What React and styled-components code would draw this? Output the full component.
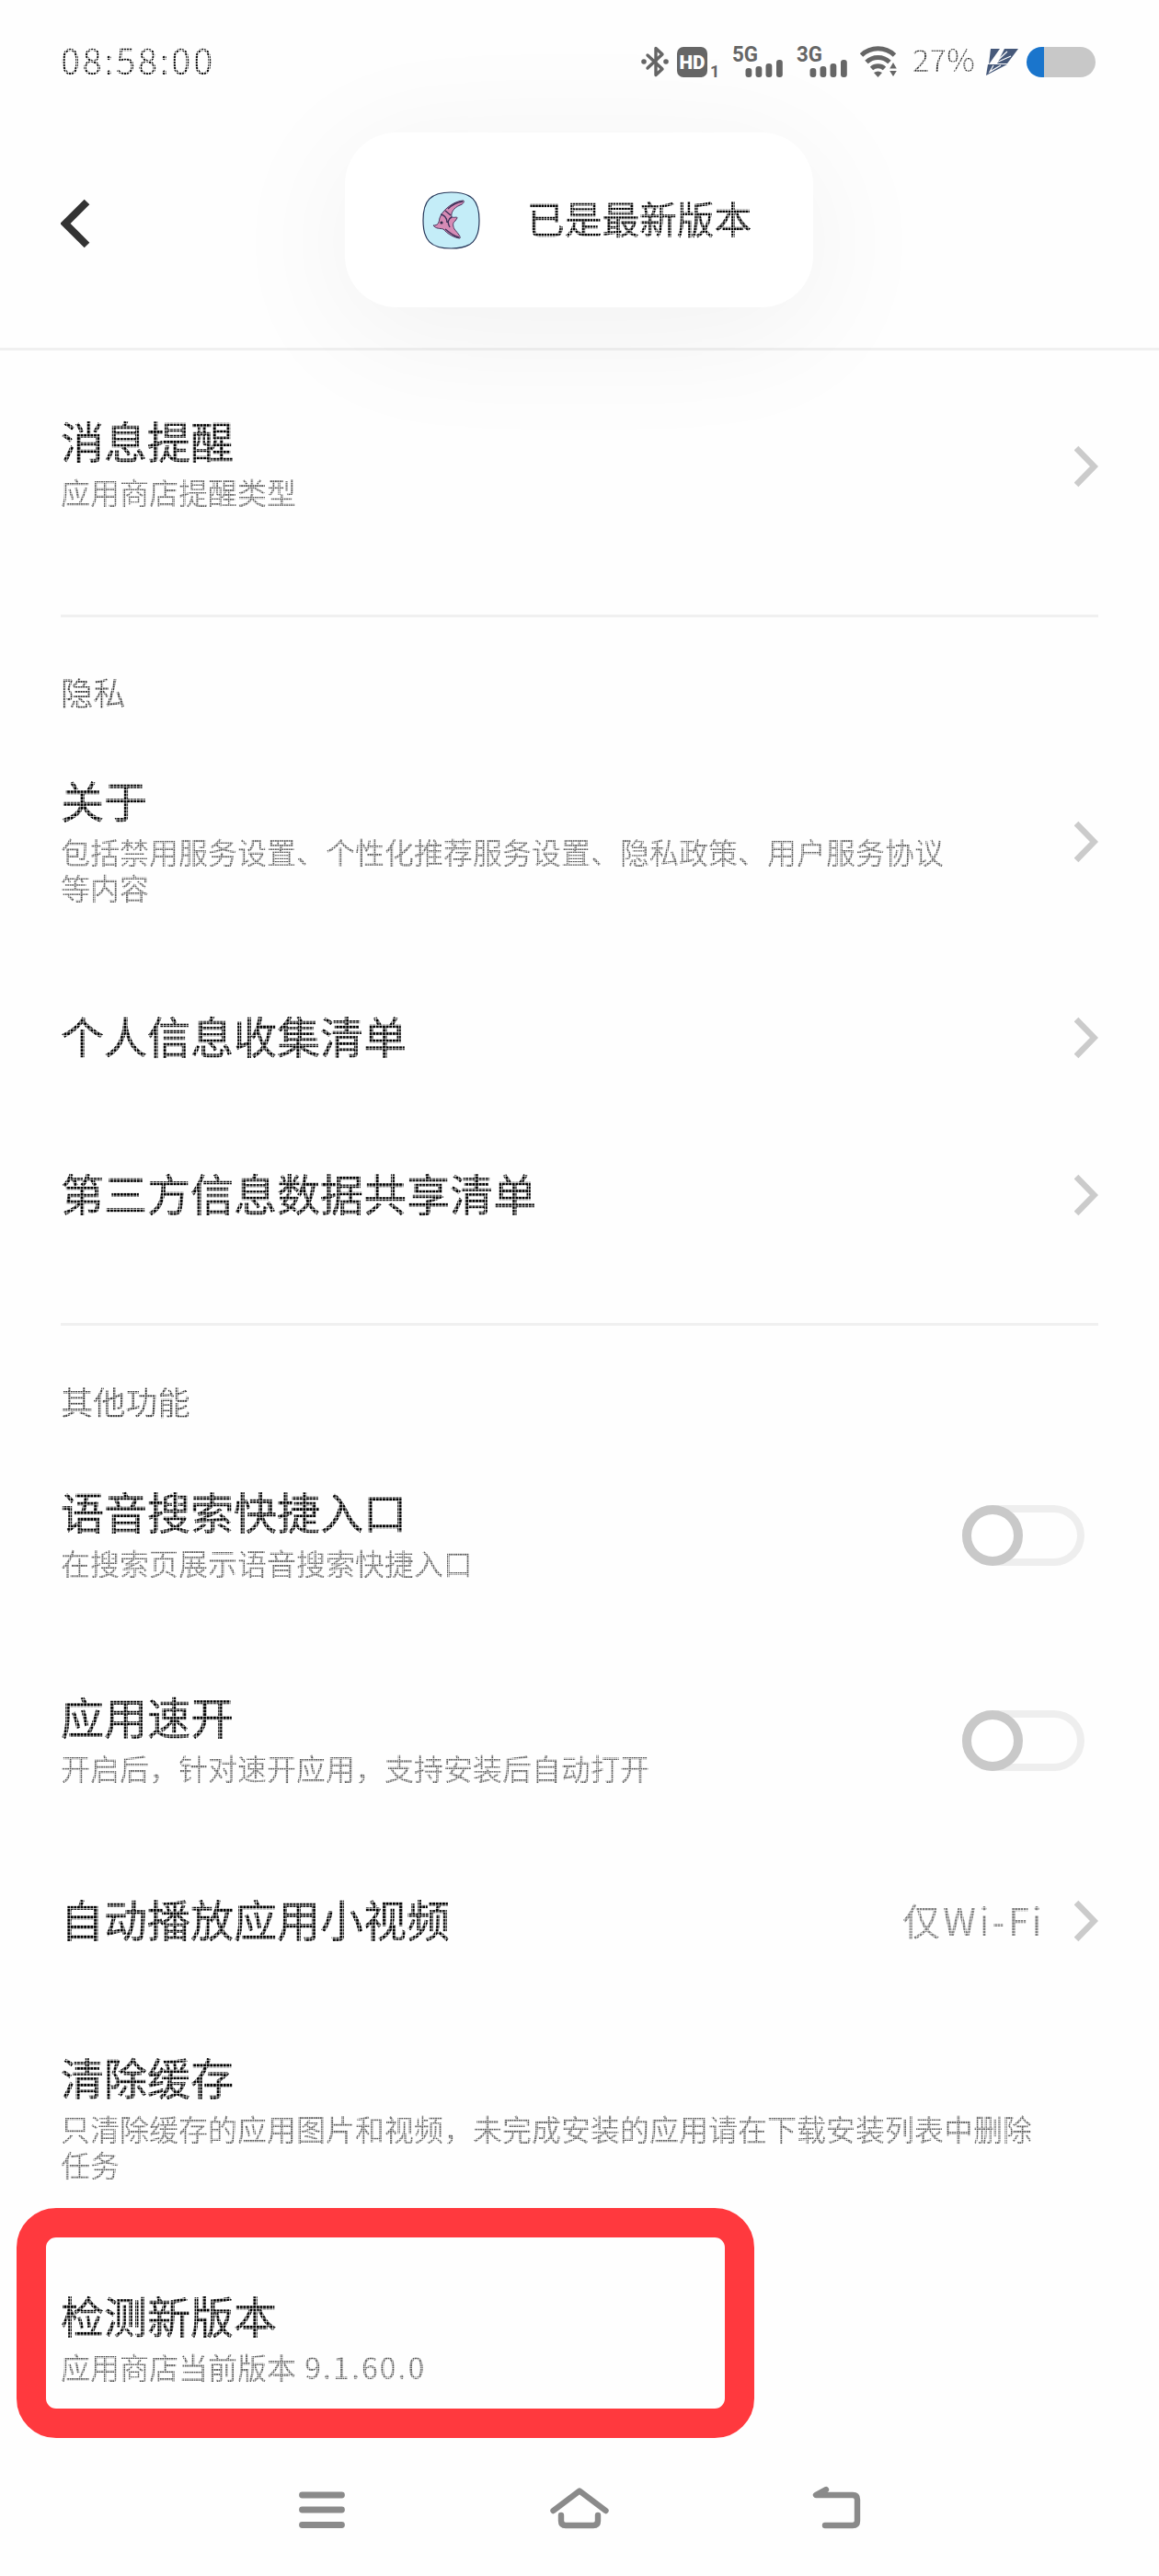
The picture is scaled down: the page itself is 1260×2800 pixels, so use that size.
import React, { useState } from 'react';
import styled, { createGlobalStyle, css } from 'styled-components';

const GlobalStyle = createGlobalStyle`
  * {
    box-sizing: border-box;
  }

  body {
    margin: 0;
    background: #fefefe;
    font-family: 'Noto Sans CJK SC', 'Liberation Sans', sans-serif;
  }
`;

// dot matrix look: every character sits on a 13 x 13 grid
const dotted = css`
  mask-image: linear-gradient(to right, #000 74%, rgba(0, 0, 0, 0.25) 74%),
    linear-gradient(to bottom, #000 74%, rgba(0, 0, 0, 0.25) 74%);
  mask-size: calc(1em / 13) calc(1em / 13);
  mask-composite: intersect;
`;

const Screen = styled.div`
  width: 1260px;
  height: 2800px;
  display: flex;
  flex-direction: column;
  position: relative;
  overflow: hidden;
`;

const StatusBar = styled.div`
  height: 134px;
  padding: 0 69px 0 66px;
  display: flex;
  align-items: center;
  justify-content: space-between;
`;

const Time = styled.span`
  ${dotted}
  margin-bottom: 7px;
  font-size: 39px;
  font-weight: 300;
  line-height: 60px;
  letter-spacing: 2.9px;
  color: #111;
  -webkit-text-stroke: 0.4px #111;
`;

const StatusIcons = styled.div`
  display: flex;
  align-items: center;
`;

const Signals = styled.div`
  margin: 0 11px 0 8px;
  display: flex;
  gap: 12px;
`;

const Percent = styled.span`
  ${dotted}
  width: 79px;
  margin: 0 0 6px 16px;
  font-size: 34px;
  font-weight: 300;
  line-height: 60px;
  letter-spacing: 0.4px;
  color: #222;
`;

const Battery = styled.div`
  width: 75px;
  height: 33px;
  margin-left: 9px;
  border-radius: 17px;
  background: linear-gradient(to right, #1a75cc 19px, #c8c8c8 19px);
`;

const Header = styled.header`
  height: 247px;
  padding: 82px 66px 0;
  border-bottom: 3px solid #f0f0f0;
`;

const BackButton = styled.button`
  display: block;
  padding: 0;
  border: none;
  background: none;
  cursor: pointer;
`;

const Toast = styled.div`
  position: absolute;
  top: 144px;
  left: 375px;
  width: 509px;
  height: 190px;
  padding-left: 84px;
  display: flex;
  align-items: center;
  gap: 51px;
  border-radius: 56px;
  background: #fff;
  box-shadow: 0 24px 150px rgba(0, 0, 0, 0.06);
`;

const ToastText = styled.span`
  ${dotted}
  margin-bottom: 5px;
  font-size: 40.7px;
  line-height: 60px;
  color: #000;
  -webkit-text-stroke: 0.4px #000;
`;

const Content = styled.main`
  padding: 0 66px;
  display: flex;
  flex-direction: column;
`;

const Divider = styled.div`
  height: 3px;
  margin-top: ${({ $top }) => $top}px;
  background: #f0f0f0;
`;

const SectionLabel = styled.div`
  ${dotted}
  margin-top: ${({ $top }) => $top}px;
  font-size: 35.2px;
  line-height: 40px;
  color: #333;
`;

const Row = styled.div`
  position: relative;
  height: ${({ $height }) => $height}px;
  margin-top: ${({ $top }) => $top}px;
  display: flex;
  align-items: center;
  justify-content: space-between;
`;

const RowText = styled.div`
  align-self: flex-start;
  width: ${({ $width }) => $width}px;
`;

const Title = styled.div`
  ${dotted}
  font-size: 47px;
  line-height: 56px;
  color: #000;
  -webkit-text-stroke: 0.6px #000;
`;

const Description = styled.div`
  ${dotted}
  margin-top: 9px;
  font-size: 32px;
  line-height: 39px;
  color: #555;
`;

const Version = styled.span`
  margin-left: 2px;
  letter-spacing: 2.1px;
`;

const RowEnd = styled.div`
  display: flex;
  align-items: center;
  gap: 32px;
`;

const Value = styled.span`
  ${dotted}
  margin-bottom: 4px;
  font-size: 41px;
  line-height: 56px;
  letter-spacing: 3.1px;
  color: #7c7c7c;
`;

const Switch = styled.button`
  width: 134px;
  height: 66px;
  margin-right: 15px;
  padding: 0;
  display: flex;
  justify-content: ${({ $on }) => ($on ? 'flex-end' : 'flex-start')};
  border: none;
  border-radius: 33px;
  background: none;
  box-shadow: inset 0 0 0 8px #eee;
  cursor: pointer;
`;

const Knob = styled.span`
  width: 66px;
  height: 66px;
  border: 10px solid #c9c9c9;
  border-radius: 50%;
  background: #fff;
`;

const Highlight = styled.div`
  position: absolute;
  top: -88px;
  left: -48px;
  width: 802px;
  height: 250px;
  border: 32.5px solid #ff393e;
  border-radius: 43px;
  pointer-events: none;
`;

const NavBar = styled.nav`
  margin-top: 103px;
  padding: 0 323px;
  display: flex;
  align-items: center;
  justify-content: space-between;
`;

const SignalIcon = ({ label }) => (
  <svg width="58" height="60" viewBox="0 -12 58 60">
    <text
      x="0"
      y="17.5"
      fontFamily="Roboto, sans-serif"
      fontSize="24"
      fontWeight="700"
      textLength="28"
      lengthAdjust="spacingAndGlyphs"
      fill="#666"
    >
      {label}
    </text>
    <g fill="#666">
      <rect x="14.5" y="25" width="6.8" height="10" rx="3" />
      <rect x="25.5" y="23" width="6.8" height="12" rx="3" />
      <rect x="36.5" y="20" width="6.8" height="15" rx="3" />
      <rect x="48" y="16" width="6.8" height="19" rx="3" />
    </g>
  </svg>
);

const BluetoothIcon = () => (
  <svg width="32" height="36" viewBox="0 0 32 36">
    <path
      d="M8 11 L24 26 L17 32.5 V3.5 L24 10 L8 25"
      fill="none"
      stroke="#666"
      strokeWidth="3.4"
      strokeLinejoin="round"
      strokeLinecap="round"
    />
    <circle cx="4" cy="18" r="2.8" fill="#666" />
    <circle cx="28" cy="18" r="2.8" fill="#666" />
  </svg>
);

const HdIcon = () => (
  <svg width="60" height="60" viewBox="0 -12 60 60">
    <rect x="8" y="2" width="33" height="33" rx="7" fill="#666" />
    <text
      x="10.5"
      y="26"
      fontFamily="Roboto, sans-serif"
      fontSize="21"
      fontWeight="900"
      textLength="28"
      lengthAdjust="spacingAndGlyphs"
      fill="#fff"
    >
      HD
    </text>
    <text
      x="44"
      y="34.5"
      fontFamily="Roboto, sans-serif"
      fontSize="18"
      fontWeight="700"
      fill="#666"
    >
      1
    </text>
  </svg>
);

const WifiIcon = () => (
  <svg width="41" height="36" viewBox="0 0 41 36">
    <g fill="none" stroke="#666" strokeWidth="5">
      <path d="M1.5 11 A26 26 0 0 1 37.5 11" />
      <path d="M7 18.5 A18 18 0 0 1 32 18.5" />
      <path d="M12.5 25.5 A10.5 10.5 0 0 1 26.5 25.5" />
    </g>
    <path d="M15 30 Q19.5 27 24 30 L19.5 35 Z" fill="#666" />
    <path d="M36 19 L39.8 25.5 H32.2 Z M36 34 L39.8 28 H32.2 Z" fill="#666" />
  </svg>
);

const FlashIcon = () => (
  <svg width="36" height="31" viewBox="0 0 36 31">
    <path d="M6 1 H16 L4 18 Z" fill="#46597a" />
    <path d="M21 1 H36 L24 17 H13 Z" fill="#46597a" />
    <path d="M3 18 H24 L1 30 Z" fill="#46597a" />
    <path d="M24 4 L10 17 L28 9 M9 19 L5 26 L17 19" fill="none" stroke="#fff" strokeWidth="1.2" />
  </svg>
);

const FishIcon = () => (
  <svg width="63" height="63" viewBox="0 0 63 63">
    <path
      d="M31.5 1 C54 1 62 10 62 31.5 C62 53 54 62 31.5 62 C9 62 1 53 1 31.5 C1 10 9 1 31.5 1 Z"
      fill="#c4edf8"
      stroke="#28385a"
      strokeWidth="1.2"
    />
    <path
      d="M12 37 C17 37 18 35 19 29 C22 20 35 10 45 10 C46 12 44 14 41 15 C34 18 31 23 32 28 C36 29 38 27 38 29 L36 32 C33 34 33 37 35 41 C39 46 42 49 41 51 C36 51 27 46 23 41 C19 40 15 41 12 37 Z"
      fill="#d68bb5"
      stroke="#49365f"
      strokeWidth="1"
      strokeLinejoin="round"
    />
    <path
      d="M20 25 C25 26 27 30 27 34 M25 21 L31 26 M32 28 C28 30 27 34 30 39 M25 41 C31 46 35 49 40 50 M28 19 C33 14 38 12 44 11"
      fill="none"
      stroke="#3c3159"
      strokeWidth="1.4"
    />
    <circle cx="21" cy="34" r="1.6" fill="#2b2948" />
  </svg>
);

const Chevron = () => (
  <svg width="26" height="46" viewBox="0 0 26 46">
    <path d="M2 3 L21.5 23 L2 43" fill="none" stroke="#cbcbcb" strokeWidth="6.6" />
  </svg>
);

const SettingRow = ({
  title,
  description,
  value,
  type = 'link',
  top,
  height,
  width = 985,
  children
}) => {
  const [on, setOn] = useState(false);

  return (
    <Row $top={top} $height={height}>
      <RowText $width={width}>
        <Title>{title}</Title>
        {description && <Description>{description}</Description>}
      </RowText>
      {type === 'link' && (
        <RowEnd>
          {value && <Value>{value}</Value>}
          <Chevron />
        </RowEnd>
      )}
      {type === 'switch' && (
        <Switch $on={on} onClick={() => setOn(!on)}>
          <Knob />
        </Switch>
      )}
      {children}
    </Row>
  );
};

const App = () => {
  return (
    <Screen>
      <GlobalStyle />
      <StatusBar>
        <Time>08:58:00</Time>
        <StatusIcons>
          <BluetoothIcon />
          <HdIcon />
          <Signals>
            <SignalIcon label="5G" />
            <SignalIcon label="3G" />
          </Signals>
          <WifiIcon />
          <Percent>27%</Percent>
          <FlashIcon />
          <Battery />
        </StatusIcons>
      </StatusBar>
      <Header>
        <BackButton>
          <svg width="34" height="54" viewBox="0 0 34 54">
            <path d="M28.5 3.5 L5 27 L28.5 50.5" fill="none" stroke="#333" strokeWidth="8" />
          </svg>
        </BackButton>
      </Header>
      <Content>
        <SettingRow
          top={69}
          height={114}
          title="消息提醒"
          description="应用商店提醒类型"
        />
        <Divider $top={104} />
        <SectionLabel $top={61}>隐私</SectionLabel>
        <SettingRow
          top={69}
          height={147}
          title="关于"
          description="包括禁用服务设置、个性化推荐服务设置、隐私政策、用户服务协议等内容"
        />
        <SettingRow top={109} height={62} title="个人信息收集清单" />
        <SettingRow top={109} height={62} title="第三方信息数据共享清单" />
        <Divider $top={108} />
        <SectionLabel $top={62}>其他功能</SectionLabel>
        <SettingRow
          top={71}
          height={110}
          type="switch"
          title="语音搜索快捷入口"
          description="在搜索页展示语音搜索快捷入口"
        />
        <SettingRow
          top={113}
          height={110}
          type="switch"
          title="应用速开"
          description="开启后，针对速开应用，支持安装后自动打开"
        />
        <SettingRow
          top={110}
          height={62}
          width={600}
          title="自动播放应用小视频"
          value="仅Wi-Fi"
        />
        <SettingRow
          top={110}
          height={143}
          width={1070}
          type="plain"
          title="清除缓存"
          description="只清除缓存的应用图片和视频，未完成安装的应用请在下载安装列表中删除任务"
        />
        <SettingRow
          top={116}
          height={107}
          type="plain"
          title="检测新版本"
          description={
            <>
              应用商店当前版本 <Version>9.1.60.0</Version>
            </>
          }
        >
          <Highlight />
        </SettingRow>
      </Content>
      <NavBar>
        <svg width="54" height="54" viewBox="0 0 54 54">
          <path
            d="M5.5 14 H48.5 M5.5 30 H48.5 M5.5 46.5 H48.5"
            stroke="#8a8a8a"
            strokeWidth="6.8"
            strokeLinecap="round"
          />
        </svg>
        <svg width="66" height="54" viewBox="0 0 66 54">
          <path
            d="M4.5 31 L33 9.5 L61.5 31 M13 36 V42 Q13 47 18 47 H48 Q53 47 53 42 V36"
            fill="none"
            stroke="#8a8a8a"
            strokeWidth="6.4"
            strokeLinecap="round"
            strokeLinejoin="round"
          />
        </svg>
        <svg width="54" height="54" viewBox="0 0 54 54">
          <path
            d="M15 8 L4 14 H44 Q49 14 49 19 V42 Q49 47 44 47 H14"
            fill="none"
            stroke="#8a8a8a"
            strokeWidth="6.4"
            strokeLinecap="round"
            strokeLinejoin="round"
          />
        </svg>
      </NavBar>
      <Toast>
        <FishIcon />
        <ToastText>已是最新版本</ToastText>
      </Toast>
    </Screen>
  );
};

export default App;
